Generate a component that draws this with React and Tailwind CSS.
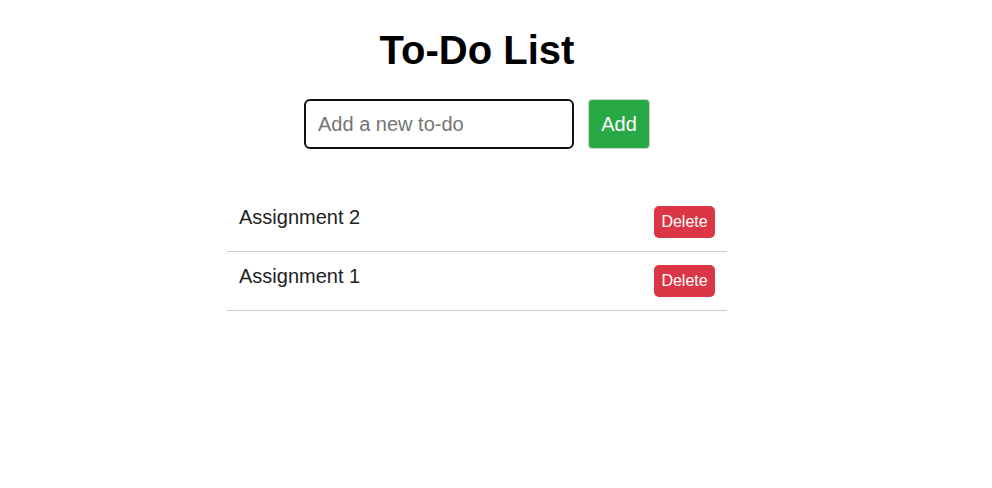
import React, { useState } from "react";

const App = () => {
    const [todos, setTodos] = useState(["Assignment 2", "Assignment 1"]);
    const [text, setText] = useState("");

    const addTodo = () => {
        if (!text.trim()) return;
        setTodos([text.trim(), ...todos]);
        setText("");
    };

    const deleteTodo = (index) => {
        setTodos(todos.filter((_, i) => i !== index));
    };

    return (
        <div className="w-[954px] bg-white font-['Liberation_Sans',Arial,sans-serif] text-[#222]">
            <div className="flex flex-col items-center pt-[27px]">
                {/* title */}
                <h1 className="text-[40px] font-bold leading-[46px] text-black">
                    To-Do List
                </h1>

                {/* new todo */}
                <div className="mt-[26px] flex gap-[14px]">
                    <input
                        type="text"
                        value={text}
                        onChange={(e) => setText(e.target.value)}
                        placeholder="Add a new to-do"
                        className="h-[50px] w-[270px] rounded-[6px] border-2 border-[#111] px-[12px] text-[20px] text-[#222] outline-none placeholder:text-[#757575]"
                    />
                    <button
                        onClick={addTodo}
                        className="h-[50px] w-[62px] rounded-[4px] border border-[#cfd8d0] bg-[#28a745] text-[20px] text-white"
                    >
                        Add
                    </button>
                </div>

                {/* list */}
                <ul className="mt-[44px] w-[500px]">
                    {todos.map((todo, index) => (
                        <li
                            key={index}
                            className="flex h-[59px] items-center justify-between border-b border-[#ccc] px-3"
                        >
                            <span className="mb-[10px] text-[20px] leading-[23px]">{todo}</span>
                            <button
                                onClick={() => deleteTodo(index)}
                                className="h-[32px] w-[61px] rounded-[5px] bg-[#dc3545] text-[16px] text-white"
                            >
                                Delete
                            </button>
                        </li>
                    ))}
                </ul>
            </div>
        </div>
    );
};

export default App;
